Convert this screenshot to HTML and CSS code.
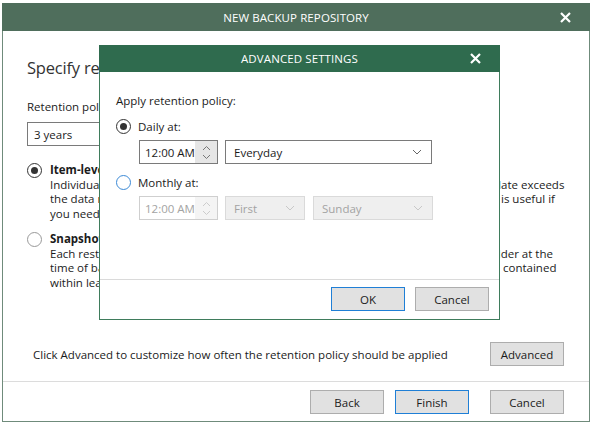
FILE: index.html
```html
<!DOCTYPE html>
<html>
<head>
<meta charset="utf-8">
<link rel="stylesheet" href="styles.css">
</head>
<body>
<div class="outer">
  <div class="otitle">
    <span class="ttext">NEW BACKUP REPOSITORY</span>
    <svg class="xicon" width="11" height="11" viewBox="0 0 11 11"><path d="M1 1 L10 10 M10 1 L1 10" stroke="#fff" stroke-width="2.2" fill="none"/></svg>
  </div>
  <div class="content">
    <div class="heading">Specify retention policy</div>
    <div class="label">Retention policy:</div>
    <div class="combo"><span>3 years</span></div>
    <div class="opt first">
      <span class="radio checked"></span>
      <div class="opttext">
        <div class="line bold">Item-level retention</div>
        <div class="line"><span class="hid w1">Individual items are retained until their last modification</span><span>date exceeds</span></div>
        <div class="line"><span class="hid w2">the data retention period. This type of retention</span><span>is useful if</span></div>
        <div class="line">you need to keep each item for a fixed period of time.</div>
      </div>
    </div>
    <div class="opt">
      <span class="radio"></span>
      <div class="opttext">
        <div class="line bold">Snapshot-based retention</div>
        <div class="line"><span class="hid w3">Each restore point contains all items in the mailbox or</span><span>folder at the</span></div>
        <div class="line"><span class="hid w4">time of backup. Restore points are removed when all items</span><span>contained</span></div>
        <div class="line">within least recent restore point are expired.</div>
      </div>
    </div>
  </div>
  <div class="advrow">
    <span>Click Advanced to customize how often the retention policy should be applied</span>
    <span class="btn">Advanced</span>
  </div>
  <div class="sep"></div>
  <div class="footer">
    <span class="btn">Back</span>
    <span class="btn primary gap">Finish</span>
    <span class="btn wide">Cancel</span>
  </div>

  <div class="inner">
    <div class="ititle">
      <span class="ttext">ADVANCED SETTINGS</span>
      <svg class="xicon" width="11" height="11" viewBox="0 0 11 11"><path d="M1 1 L10 10 M10 1 L1 10" stroke="#fff" stroke-width="2.2" fill="none"/></svg>
    </div>
    <div class="icontent">
      <div class="ilabel">Apply retention policy:</div>
      <div class="irow">
        <span class="radio checked"></span><span>Daily at:</span>
      </div>
      <div class="fields">
        <div class="time">
          <span class="tval">12:00 AM</span>
          <span class="spin">
            <svg width="9" height="6" viewBox="0 0 9 6"><path d="M1 5 L4.5 1.5 L8 5" stroke="#777" stroke-width="1" fill="none"/></svg>
            <svg width="9" height="6" viewBox="0 0 9 6"><path d="M1 1 L4.5 4.5 L8 1" stroke="#777" stroke-width="1" fill="none"/></svg>
          </span>
        </div>
        <div class="select sel-every">
          <span>Everyday</span>
          <svg width="10" height="6" viewBox="0 0 10 6"><path d="M1 1 L5 5 L9 1" stroke="#666" stroke-width="1" fill="none"/></svg>
        </div>
      </div>
      <div class="irow">
        <span class="radio focus"></span><span>Monthly at:</span>
      </div>
      <div class="fields">
        <div class="time disabled">
          <span class="tval">12:00 AM</span>
          <span class="spin">
            <svg width="9" height="6" viewBox="0 0 9 6"><path d="M1 5 L4.5 1.5 L8 5" stroke="#ccc" stroke-width="1" fill="none"/></svg>
            <svg width="9" height="6" viewBox="0 0 9 6"><path d="M1 1 L4.5 4.5 L8 1" stroke="#ccc" stroke-width="1" fill="none"/></svg>
          </span>
        </div>
        <div class="select disabled sel-first">
          <span>First</span>
          <svg width="10" height="6" viewBox="0 0 10 6"><path d="M1 1 L5 5 L9 1" stroke="#c8c8c8" stroke-width="1" fill="none"/></svg>
        </div>
        <div class="select disabled sel-sun">
          <span>Sunday</span>
          <svg width="10" height="6" viewBox="0 0 10 6"><path d="M1 1 L5 5 L9 1" stroke="#c8c8c8" stroke-width="1" fill="none"/></svg>
        </div>
      </div>
    </div>
    <div class="isep"></div>
    <div class="ifooter">
      <span class="btn primary">OK</span>
      <span class="btn">Cancel</span>
    </div>
  </div>
</div>
</body>
</html>
```
FILE: styles.css
```css
* { box-sizing: border-box; }
html, body { margin: 0; padding: 0; background: #ffffff; }
body {
  font-family: "Open Sans", "Noto Sans", sans-serif;
  font-size: 11.5px;
  color: #1b1b1b;
  width: 592px;
  height: 424px;
  overflow: hidden;
}
.outer {
  position: relative;
  margin: 3px 2px 0 2px;
  height: 419px;
  border: 1px solid #6f8b7b;
  border-top: none;
  display: flex;
  flex-direction: column;
  background: #fff;
}
.otitle {
  height: 28px;
  background: #4f6e5c;
  color: #fff;
  display: flex;
  align-items: center;
  justify-content: center;
  position: relative;
  margin: 0 -1px;
}
.ttext { font-size: 11.5px; letter-spacing: 0.1px; }
.xicon { position: absolute; right: 19px; top: 9px; }
.content {
  flex: 1;
  padding-left: 24px;
}
.heading {
  margin-top: 26px;
  font-size: 16.5px;
  letter-spacing: -0.2px;
  line-height: 22px;
  color: #333;
  font-weight: 400;
  white-space: nowrap;
}
.label { margin-top: 20px; line-height: 16px; }
.combo {
  margin-top: 7px;
  width: 300px;
  height: 24px;
  border: 1px solid #7a7a7a;
  display: flex;
  align-items: center;
  padding-left: 6px;
}
.opt { display: flex; margin-top: 10px; }
.opt.first { margin-top: 17px; }
.radio {
  width: 15px;
  height: 15px;
  border-radius: 50%;
  border: 1px solid #999;
  background: #fff;
  flex: none;
  display: flex;
  align-items: center;
  justify-content: center;
}
.radio.checked { border-color: #333; }
.radio.checked::after {
  content: "";
  width: 7px;
  height: 7px;
  border-radius: 50%;
  background: #333;
}
.radio.focus { border: 1.5px solid #3c8ad6; }
.opttext { margin-left: 8px; line-height: 14.7px; }
.bold { font-weight: 700; }
.line { display: flex; white-space: nowrap; }
.hid { flex: none; overflow: hidden; }
.w1 { width: 444px; }
.w2 { width: 451px; }
.w3 { width: 437px; }
.w4 { width: 453px; }
.advrow {
  display: flex;
  align-items: center;
  justify-content: space-between;
  padding: 0 25px 0 30px;
  height: 26px;
  margin-bottom: 14px;
}
.sep { height: 1px; background: #dcdcdc; }
.footer {
  display: flex;
  justify-content: flex-end;
  padding: 8px 25px 7px 0;
}
.btn {
  width: 74px;
  height: 24px;
  border: 1px solid #adadad;
  background: #e1e1e1;
  display: flex;
  align-items: center;
  justify-content: center;
  color: #1b1b1b;
}
.btn.primary { border-color: #1f7fd6; }
.btn.gap { margin-left: 11px; }
.btn.wide { margin-left: 21px; }

.inner {
  position: absolute;
  left: 96px;
  top: 42px;
  width: 401px;
  height: 275px;
  border: 1px solid #3f7c5c;
  border-top: none;
  background: #fff;
  display: flex;
  flex-direction: column;
}
.ititle {
  height: 27px;
  background: #2f6b4e;
  color: #fff;
  display: flex;
  align-items: center;
  justify-content: center;
  position: relative;
  margin: 0 -1px;
}
.ititle .xicon { right: 19px; top: 8px; }
.icontent { flex: 1; padding: 21px 0 0 16px; }
.ilabel { line-height: 16px; }
.irow {
  display: flex;
  align-items: center;
  gap: 7px;
  margin-top: 9px;
  height: 16px;
}
.fields {
  display: flex;
  gap: 7px;
  margin: 6px 0 0 23px;
}
.fields + .irow { margin-top: 10px; }
.time {
  width: 79px;
  height: 24px;
  border: 1px solid #7a7a7a;
  display: flex;
  align-items: center;
  justify-content: space-between;
  padding-left: 5px;
  overflow: hidden;
}
.tval { white-space: nowrap; }
.spin {
  width: 22px;
  height: 100%;
  background: #e6e6e6;
  display: flex;
  flex-direction: column;
  align-items: center;
  justify-content: space-around;
  padding: 2px 0;
  flex: none;
}
.time.disabled { border-color: #cfcfcf; color: #a3a3a3; }
.time.disabled .spin { background: #f4f4f4; }
.select {
  height: 24px;
  border: 1px solid #7a7a7a;
  display: flex;
  align-items: center;
  justify-content: space-between;
  padding: 0 9px 0 8px;
}
.sel-every { width: 207px; }
.select.disabled { background: #efefef; border-color: #dadada; color: #a3a3a3; }
.sel-first { width: 80px; }
.sel-sun { width: 120px; margin-left: 1px; }
.isep { height: 1px; background: #dadada; }
.ifooter {
  display: flex;
  justify-content: flex-end;
  gap: 10px;
  padding: 7px 10px 8px 0;
}
```
